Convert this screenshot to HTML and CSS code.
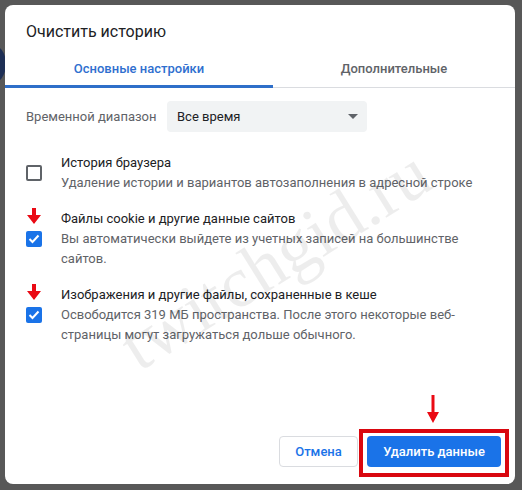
FILE: index.html
```html
<!DOCTYPE html>
<html lang="ru">
<head>
<meta charset="utf-8">
<title>Очистить историю</title>
<link rel="stylesheet" href="styles.css">
</head>
<body>
<div class="backdrop-circle"></div>
<div class="dialog">
  <h1 class="title">Очистить историю</h1>
  <div class="tabs">
    <div class="tab tab-basic active">Основные настройки</div>
    <div class="tab tab-advanced">Дополнительные</div>
  </div>
  <div class="range">
    <span class="range-label">Временной диапазон</span>
    <div class="select">
      <span>Все время</span>
      <svg class="select-arrow" width="10" height="5" viewBox="0 0 10 5"><path d="M0 0h10L5 5z" fill="#5f6368"/></svg>
    </div>
  </div>
  <div class="options">
    <div class="option">
      <span class="checkbox"></span>
      <div class="option-text">
        <div class="option-title">История браузера</div>
        <div class="option-sub">Удаление истории и вариантов автозаполнения в адресной строке</div>
      </div>
    </div>
    <div class="option">
      <span class="checkbox checked">
        <svg class="red-arrow" width="14" height="16" viewBox="0 0 14 16"><path d="M5 0h4v7h5l-7 9-7-9h5z" fill="#ea0a14"/></svg>
        <svg class="check" width="12" height="10" viewBox="0 0 12 10"><path d="M1.5 5l3 3 6-6.5" fill="none" stroke="#fff" stroke-width="2"/></svg>
      </span>
      <div class="option-text">
        <div class="option-title">Файлы cookie и другие данные сайтов</div>
        <div class="option-sub">Вы автоматически выйдете из учетных записей на большинстве сайтов.</div>
      </div>
    </div>
    <div class="option">
      <span class="checkbox checked">
        <svg class="red-arrow" width="14" height="16" viewBox="0 0 14 16"><path d="M5 0h4v7h5l-7 9-7-9h5z" fill="#ea0a14"/></svg>
        <svg class="check" width="12" height="10" viewBox="0 0 12 10"><path d="M1.5 5l3 3 6-6.5" fill="none" stroke="#fff" stroke-width="2"/></svg>
      </span>
      <div class="option-text">
        <div class="option-title">Изображения и другие файлы, сохраненные в кеше</div>
        <div class="option-sub">Освободится 319 МБ пространства. После этого некоторые веб-страницы могут загружаться дольше обычного.</div>
      </div>
    </div>
  </div>
  <div class="actions">
    <button class="btn btn-cancel">Отмена</button>
    <button class="btn btn-primary">
      <svg class="btn-arrow" width="12" height="28" viewBox="0 0 12 28"><path d="M4.5 0h3v17h4.5l-6 11-6-11h4.5z" fill="#ea0a14"/></svg>
      Удалить данные
    </button>
  </div>
  <div class="watermark">twitchgid.ru</div>
</div>
</body>
</html>
```

FILE: styles.css
```css
* { box-sizing: border-box; }

html, body {
  margin: 0;
  width: 522px;
  height: 490px;
  overflow: hidden;
}

body {
  background: #585858;
  font-family: Roboto, "Noto Sans", Arial, sans-serif;
  position: relative;
  padding: 5px 7px 6px 5px;
}

.backdrop-circle {
  position: absolute;
  left: -24px;
  top: 44px;
  width: 30px;
  height: 40px;
  border-radius: 50%;
  background: #1e2f55;
}

.dialog {
  position: relative;
  width: 510px;
  height: 479px;
  background: #fff;
  border-radius: 8px;
  display: flex;
  flex-direction: column;
  overflow: hidden;
}

.title {
  margin: 0;
  padding: 17px 0 0 21px;
  font-size: 16px;
  line-height: 20px;
  font-weight: 400;
  color: #202124;
}

.tabs {
  display: flex;
  height: 39px;
  margin-top: 7px;
  box-shadow: inset 0 -1px 0 #dadce0;
}

.tab {
  display: flex;
  align-items: center;
  justify-content: center;
  font-size: 13px;
  font-weight: 500;
  color: #5f6368;
  padding-bottom: 1px;
}

.tab-basic { width: 268px; }
.tab-advanced { width: 242px; }

.tab.active {
  color: #2f6fcf;
  box-shadow: inset 0 -3px 0 #2f6fc9;
}

.range {
  display: flex;
  align-items: center;
  margin-top: 13px;
  padding-left: 21px;
}

.range-label {
  width: 141px;
  font-size: 13px;
  color: #5f6368;
}

.select {
  width: 200px;
  height: 31px;
  background: #f1f3f4;
  border-radius: 4px;
  display: flex;
  align-items: center;
  justify-content: space-between;
  padding: 0 9px 0 10px;
  font-size: 13px;
  color: #202124;
}

.options {
  display: flex;
  flex-direction: column;
  gap: 16px;
  margin-top: 21px;
}

.option {
  display: flex;
  align-items: center;
  gap: 19px;
  padding-left: 21px;
}

.checkbox {
  position: relative;
  flex: none;
  width: 16px;
  height: 16px;
  border: 2px solid #5f6368;
  border-radius: 2px;
  display: flex;
  align-items: center;
  justify-content: center;
}

.checkbox.checked {
  border: none;
  background: #1a73e8;
}

.red-arrow {
  position: absolute;
  left: 1px;
  top: -23px;
}

.option-text {
  width: 430px;
  font-size: 13px;
  line-height: 20px;
}

.option-title { color: #202124; }
.option-sub { color: #5f6368; }

.actions {
  margin-top: auto;
  display: flex;
  justify-content: flex-end;
  gap: 9px;
  padding: 0 14px 17px 0;
}

.btn {
  position: relative;
  height: 31px;
  border-radius: 4px;
  font-family: Roboto, "Noto Sans", Arial, sans-serif;
  font-size: 13px;
  font-weight: 500;
  cursor: pointer;
}

.btn-cancel {
  width: 79px;
  background: #fff;
  border: 1px solid #dadce0;
  color: #1a73e8;
}

.btn-primary {
  width: 134px;
  background: #1a73e8;
  border: none;
  color: #fff;
}

.btn-primary::before {
  content: "";
  position: absolute;
  left: -8px;
  right: -8px;
  top: -7px;
  bottom: -10px;
  border: 4px solid #d9070f;
}

.btn-arrow {
  position: absolute;
  left: 60px;
  top: -41px;
}

.watermark {
  position: absolute;
  left: 95px;
  top: 213px;
  font-family: "Liberation Serif", "DejaVu Serif", serif;
  font-size: 72px;
  color: rgba(0, 0, 0, 0.07);
  transform: rotate(-32deg);
  transform-origin: center;
  white-space: nowrap;
  pointer-events: none;
}
```
